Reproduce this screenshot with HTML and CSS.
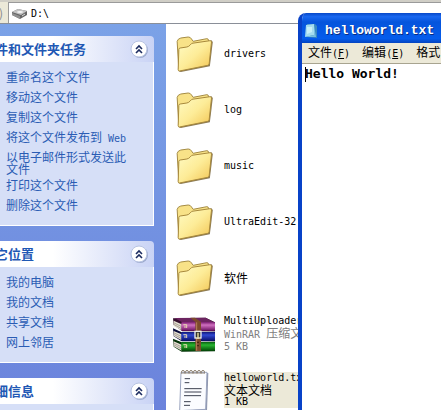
FILE: index.html
```
<!DOCTYPE html>
<html lang="zh-CN">
<head>
  <meta charset="UTF-8">
  <meta name="viewport" content="width=device-width, initial-scale=1.0">
  <title>D:\</title>
  <link rel="stylesheet" href="styles.css">
</head>
<body>
  <!-- shared icons -->
  <svg width="0" height="0" class="defs" aria-hidden="true">
    <defs>
      <linearGradient id="front" x1="0" y1="0" x2="1" y2="1">
        <stop offset="0" stop-color="#fffbc4"/>
        <stop offset="0.5" stop-color="#fdec98"/>
        <stop offset="1" stop-color="#f2c451"/>
      </linearGradient>
      <linearGradient id="purple" x1="0" y1="0" x2="0" y2="1">
        <stop offset="0" stop-color="#7a1c70"/><stop offset="0.35" stop-color="#d070c0"/><stop offset="1" stop-color="#6d1262"/>
      </linearGradient>
      <linearGradient id="blue" x1="0" y1="0" x2="0" y2="1">
        <stop offset="0" stop-color="#101878"/><stop offset="0.35" stop-color="#3048d0"/><stop offset="1" stop-color="#0c1270"/>
      </linearGradient>
      <linearGradient id="green" x1="0" y1="0" x2="0" y2="1">
        <stop offset="0" stop-color="#086010"/><stop offset="0.35" stop-color="#28b430"/><stop offset="1" stop-color="#045008"/>
      </linearGradient>
      <symbol id="folder" viewBox="0 0 110 108">
        <path d="M8 106 L14 108 L101 91 L110 18 L105 12Z" fill="#8a7a58"/>
        <path d="M3 16 Q5 8 14 6 L36 3 Q43 3 46 9 L51 16 L92 8 Q97 8 97 13 L98 80 L8 104Z" fill="#f8e288" stroke="#a58c45" stroke-width="3"/>
        <path d="M8 40 Q8 37 12 36 L32 33 Q38 32 42 27 L47 22 L102 14 Q106 14 106 18 L99 84 Q98 87 95 88 L10 105 Q6 105 6 101Z" fill="url(#front)" stroke="#a8893c" stroke-width="3"/>
      </symbol>
      <symbol id="up" viewBox="0 0 19 19">
        <circle cx="10" cy="10" r="8" fill="#9aa8cc"/>
        <circle cx="9" cy="9" r="8" fill="#fff" stroke="#b8c4e2"/>
        <path d="M6 9 L9 6 L12 9 M6 13 L9 10 L12 13" fill="none" stroke="#1c2c60" stroke-width="1.6"/>
      </symbol>
    </defs>
  </svg>

  <div class="explorer">
    <div class="address">
      <label for="addr">地址(D)</label>
      <div class="field">
        <svg width="17" height="12" viewBox="0 0 17 12">
          <path d="M1 4 L7 1 L16 3 L16 7 L9 11 L1 7Z" fill="#666"/>
          <path d="M1 4 L7 1 L16 3 L10 7Z" fill="#c4c4c4"/>
          <ellipse cx="9" cy="4" rx="3" ry="1" fill="#f6f6f6"/>
          <path d="M1 5 L9 8 L9 11 L1 7Z" fill="#909090"/>
          <path d="M11 8 L14 6" stroke="#ddd"/>
        </svg>
        <input id="addr" type="text" value="D:\">
      </div>
    </div>

    <div class="main">
      <div class="sidebar">
        <div class="panel">
          <div class="panel-head">
            <h2>文件和文件夹任务</h2>
            <button aria-label="折叠"><svg width="19" height="19"><use href="#up"/></svg></button>
          </div>
          <ul>
            <li><a href="#">重命名这个文件</a></li>
            <li><a href="#">移动这个文件</a></li>
            <li><a href="#">复制这个文件</a></li>
            <li><a href="#">将这个文件发布到<span class="en"> Web</span></a></li>
            <li><a href="#">以电子邮件形式发送此文件</a></li>
            <li><a href="#">打印这个文件</a></li>
            <li><a href="#">删除这个文件</a></li>
          </ul>
        </div>
        <div class="panel">
          <div class="panel-head">
            <h2>其它位置</h2>
            <button aria-label="折叠"><svg width="19" height="19"><use href="#up"/></svg></button>
          </div>
          <ul>
            <li><a href="#">我的电脑</a></li>
            <li><a href="#">我的文档</a></li>
            <li><a href="#">共享文档</a></li>
            <li><a href="#">网上邻居</a></li>
          </ul>
        </div>
        <div class="panel">
          <div class="panel-head">
            <h2>详细信息</h2>
            <button aria-label="折叠"><svg width="19" height="19"><use href="#up"/></svg></button>
          </div>
          <ul></ul>
        </div>
      </div>

      <div class="files">
        <div class="file">
          <div class="icon"><svg width="37" height="36"><use href="#folder"/></svg></div>
          <div class="name"><p class="en">drivers</p></div>
        </div>
        <div class="file">
          <div class="icon"><svg width="37" height="36"><use href="#folder"/></svg></div>
          <div class="name"><p class="en">log</p></div>
        </div>
        <div class="file">
          <div class="icon"><svg width="37" height="36"><use href="#folder"/></svg></div>
          <div class="name"><p class="en">music</p></div>
        </div>
        <div class="file">
          <div class="icon"><svg width="37" height="36"><use href="#folder"/></svg></div>
          <div class="name"><p class="en">UltraEdit-32</p></div>
        </div>
        <div class="file">
          <div class="icon"><svg width="37" height="36"><use href="#folder"/></svg></div>
          <div class="name"><p>软件</p></div>
        </div>
        <div class="file">
          <div class="icon">
            <svg width="42" height="35" viewBox="0 0 126 105">
              <path d="M0 4 L98 2 L126 16 L126 43 L28 43 L2 24Z" fill="#35102f"/>
              <path d="M4 3 L98 2 L122 15 L26 15Z" fill="#6c2460"/>
              <path d="M2 11 L26 22 L26 40 L2 27Z" fill="#e4dfd2"/>
              <path d="M2 17 L26 29 M2 22 L26 35" stroke="#8c867c" stroke-width="2"/>
              <rect x="25" y="15" width="101" height="26" rx="3" fill="url(#purple)"/>
              <path d="M0 34 L26 46 L126 44 L126 73 L26 73 L2 58Z" fill="#0a0d3c"/>
              <path d="M2 42 L26 52 L26 70 L2 57Z" fill="#e4dfd2"/>
              <path d="M2 47 L26 59 M2 52 L26 65" stroke="#8c867c" stroke-width="2"/>
              <rect x="25" y="45" width="101" height="26" rx="3" fill="url(#blue)"/>
              <path d="M0 65 L26 76 L126 74 L126 103 L26 104 L2 89Z" fill="#06330a"/>
              <path d="M2 73 L26 83 L26 101 L2 88Z" fill="#e4dfd2"/>
              <path d="M2 78 L26 90 M2 83 L26 96" stroke="#8c867c" stroke-width="2"/>
              <rect x="25" y="75" width="101" height="26" rx="3" fill="url(#green)"/>
              <path d="M31 23 h10 v10 M36 26 v7 M31 53 h10 v10 M36 56 v7 M31 83 h10 v10 M36 86 v7" fill="none" stroke="#e8d8b0" stroke-width="3"/>
              <path d="M52 2 L66 2 L84 15 L84 102 L67 102 L67 15Z" fill="#7c4a2c"/>
              <path d="M71 16 V101" stroke="#b8825a" stroke-width="3"/>
              <rect x="66" y="43" width="18" height="20" fill="#333" stroke="#eee" stroke-width="4"/>
              <path d="M75 47 V66" stroke="#f4e8a0" stroke-width="4"/>
              <path d="M75 74 v4 M75 84 v4" stroke="#2c1608" stroke-width="4"/>
            </svg>
          </div>
          <div class="name">
            <p class="en">MultiUploader</p>
            <p class="dim"><span class="en">WinRAR </span>压缩文件</p>
            <p class="en dim">5 KB</p>
          </div>
        </div>
        <div class="file selected">
          <div class="icon">
            <svg width="30" height="43" viewBox="0 0 90 129">
              <path d="M10 12 L88 12 L84 127 L4 129Z" fill="#8e96ae"/>
              <path d="M6 10 L84 10 L80 121 L2 125Z" fill="#fbfcff" stroke="#9aa4bf" stroke-width="3"/>
              <path d="M9 15 q-4 -11 3 -11 q7 0 3 11 M21 15 q-4 -11 3 -11 q7 0 3 11 M33 15 q-4 -11 3 -11 q7 0 3 11 M45 15 q-4 -11 3 -11 q7 0 3 11 M57 15 q-4 -11 3 -11 q7 0 3 11 M69 15 q-4 -11 3 -11 q7 0 3 11" fill="none" stroke="#857868" stroke-width="3"/>
              <path d="M17 29 H33 M17 41 H31 M16 59 H68 M16 69 H67 M15 80 H66 M15 98 H35 M15 109 H33" stroke="#3c4050" stroke-width="3"/>
            </svg>
          </div>
          <div class="name">
            <p class="en">helloworld.txt</p>
            <p>文本文档</p>
            <p class="en">1 KB</p>
          </div>
        </div>
      </div>
    </div>
  </div>

  <div class="notepad">
    <div class="titlebar">
      <svg width="14" height="16" viewBox="0 0 14 16">
        <path d="M3 1 L11 1 L13 3 L13 15 L2 14Z" fill="#3a88c0"/>
        <path d="M2 2 L10 1 L10 12 L1 14Z" fill="#a4dcf0"/>
        <path d="M3 4 L8 4 L8 9 L3 11Z" fill="#c8f0f8"/>
        <path d="M10 2 L12 14 L1 14 L10 12Z" fill="#78bfe0"/>
      </svg>
      <h1>helloworld.txt</h1>
    </div>
    <div class="menu">
      <button>文件<span class="en">(<u>F</u>)</span></button>
      <button>编辑<span class="en">(<u>E</u>)</span></button>
      <button>格式<span class="en">(<u>O</u>)</span></button>
    </div>
    <div class="text">
      <textarea aria-label="helloworld.txt" spellcheck="false">Hello World!</textarea>
      <span class="caret"></span>
    </div>
  </div>
</body>
</html>
```
FILE: styles.css
```
*{margin: 0; padding: 0; box-sizing: border-box;}

body{
  position: relative;
  height: 100vh;
  overflow: hidden;
  background-color: #fff;
  font: 12px/12px "Noto Sans CJK SC", sans-serif;
  color: #000;
}

.defs{position: absolute;}
svg{display: block; flex: none;}
button{border: none; background: none; font: inherit; color: inherit;}
ul{list-style: none;}

.en{
  font-family: "DejaVu Sans Mono", monospace;
  font-size: 10px;
}

.explorer{
  height: 100%;
  display: flex;
  flex-direction: column;
}

/* address bar */
.address{
  height: 24px;
  flex: none;
  display: flex;
  align-items: stretch;
  border-top: 2px solid #d0cec6;
  border-bottom: 1px solid #8a8f98;
  background-color: #ece9d8;
}

.address label{
  width: 8px;
  padding-right: 5px;
  display: flex;
  justify-content: flex-end;
  align-items: center;
  overflow: hidden;
  white-space: nowrap;
  color: #888;
}

.field{
  flex: 1;
  display: flex;
  align-items: center;
  gap: 3px;
  padding: 2px 0 0 2px;
  border-top: 1px solid #9a9a9a;
  border-left: 1px solid #9a9a9a;
  background-color: #fff;
}

.field input{
  flex: 1;
  min-width: 0;
  border: none;
  outline: none;
  background: none;
  font: 10px/12px "DejaVu Sans Mono", monospace;
}

.main{
  flex: 1;
  min-height: 0;
  display: flex;
}

/* task panels */
.sidebar{
  width: 166px;
  flex: none;
  padding: 12px 12px 0 0;
  display: flex;
  flex-direction: column;
  gap: 15px;
  overflow: hidden;
  background: linear-gradient(#7ba2e7, #6b83dc);
}

.panel{
  margin-left: -30px;
  flex: none;
}

.panel-head{
  height: 26px;
  padding: 0 5px 0 12px;
  display: flex;
  justify-content: space-between;
  align-items: center;
  border-radius: 0 4px 0 0;
  background: linear-gradient(to right, #fff 45%, #c9d3f5);
}

.panel-head h2{
  font-size: 13px;
  line-height: 16px;
  color: #1f58b4;
}

.panel ul{
  padding: 9px 24px 10px 35px;
  border: 1px solid #fff;
  border-top: none;
  background-color: #d6dff7;
}

.panel li{min-height: 16px;}
.panel li + li{margin-top: 4px;}

.panel a{
  display: block;
  color: #2a5cb4;
  text-decoration: none;
}

/* file list */
.files{
  flex: 1;
  min-width: 0;
  padding: 2px 0 0 5px;
  overflow: hidden;
}

.file{
  height: 56px;
  display: flex;
  align-items: center;
  gap: 7px;
}

.icon{
  width: 46px;
  flex: none;
  display: flex;
  justify-content: center;
}

.name{
  flex: 1;
  white-space: nowrap;
}

.dim{color: #808080;}
.selected .name{background-color: #ece9d8;}

/* notepad window, over the file list */
.notepad{
  position: absolute;
  top: 13px;
  left: 298px;
  right: 0;
  bottom: 0;
  display: flex;
  flex-direction: column;
  overflow: hidden;
  border-left: 4px solid #0842c8;
  border-radius: 8px 0 0 0;
  background-color: #fff;
}

.titlebar{
  height: 30px;
  flex: none;
  padding: 5px 0 0 2px;
  display: flex;
  align-items: center;
  gap: 7px;
  background: linear-gradient(#0848c8, #1a68f0 12%, #0554dc 30%, #055cec 85%, #0344c0);
}

.titlebar h1{
  font: bold 13px/16px "Liberation Mono", monospace;
  color: #fff;
  text-shadow: 1px 1px #0a2c80;
}

.menu{
  height: 21px;
  flex: none;
  padding-left: 6px;
  display: flex;
  align-items: center;
  gap: 12px;
  white-space: nowrap;
  border-bottom: 1px solid #a8a490;
  background-color: #ece9d8;
}

.text{
  flex: 1;
  position: relative;
  padding: 2px 0 0 3px;
}

.text textarea{
  display: block;
  width: 100%;
  height: 100%;
  border: none;
  outline: none;
  resize: none;
  overflow: hidden;
  background: none;
  font: bold 13px/16px "DejaVu Sans Mono", monospace;
}

.caret{
  position: absolute;
  top: 3px;
  left: 3px;
  width: 1px;
  height: 15px;
  background-color: #000;
}
```
